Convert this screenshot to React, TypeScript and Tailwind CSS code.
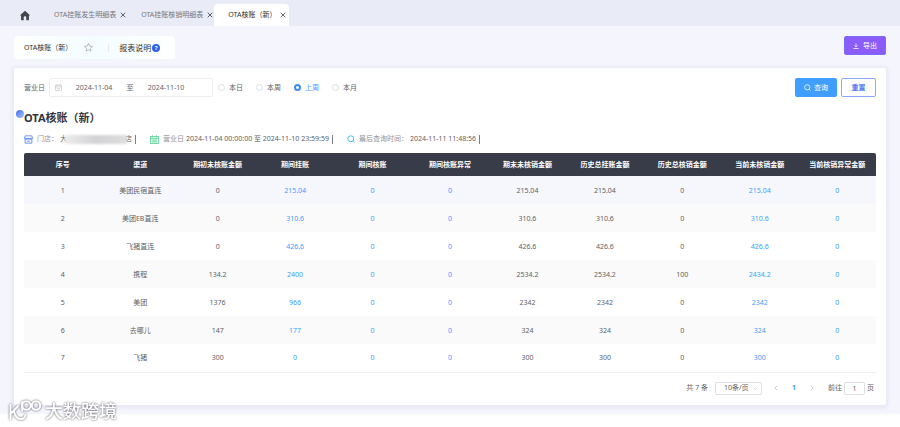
import React, { ReactElement, ReactNode, useState } from 'react';
import c from 'clsx';

const TABS = ['OTA挂账发生明细表', 'OTA挂账核销明细表', 'OTA核账（新）'];

const RANGES = ['本日', '本周', '上周', '本月'];

const COLUMNS = [
  '序号',
  '渠道',
  '期初未核账金额',
  '期间挂账',
  '期间核账',
  '期间核账异常',
  '期末未核销金额',
  '历史总挂账金额',
  '历史总核销金额',
  '当前未核销金额',
  '当前核销异常金额',
];

// columns that open a detail view
const LINK_COLUMNS = [3, 4, 5, 9, 10];

const ROWS = [
  ['1', '美团民宿直连', '0', '215.04', '0', '0', '215.04', '215.04', '0', '215.04', '0'],
  ['2', '美团EB直连', '0', '310.6', '0', '0', '310.6', '310.6', '0', '310.6', '0'],
  ['3', '飞猪直连', '0', '426.6', '0', '0', '426.6', '426.6', '0', '426.6', '0'],
  ['4', '携程', '134.2', '2400', '0', '0', '2534.2', '2534.2', '100', '2434.2', '0'],
  ['5', '美团', '1376', '966', '0', '0', '2342', '2342', '0', '2342', '0'],
  ['6', '去哪儿', '147', '177', '0', '0', '324', '324', '0', '324', '0'],
  ['7', '飞猪', '300', '0', '0', '0', '300', '300', '0', '300', '0'],
];

export default function App(): ReactElement {
  return (
    <div className="relative bg-white font-['Noto_Sans','Noto_Sans_CJK_SC',sans-serif] text-[7px] leading-[10px] text-[#606266]">
      <div className="bg-[#f4f5fd] pb-[9px]">
        <TabBar />
        <main className="px-[14px] pt-[10px]">
          <div className="flex items-start justify-between">
            <ReportHeader />
            <button className="flex h-[19px] w-[42px] items-center justify-center gap-1 rounded-xs border border-[#7a6cf8] bg-[#8a5cfa] text-white">
              <DownloadIcon />
              导出
            </button>
          </div>
          <section className="mt-[9px] rounded-xs bg-white p-[10px] shadow-[0_1px_4px_2px_rgba(60,60,110,0.07)]">
            <FilterBar />
            <h1 className="relative mt-[12px] text-[11px] leading-[18px] font-bold text-[#303440]">
              <span className="absolute top-px -left-[8px] size-[8px] rounded-full bg-linear-to-br from-[#3f66ee] to-[#b4c5fb]" />
              OTA核账（新）
            </h1>
            <InfoLine />
            <ReportTable />
            <Pagination />
          </section>
        </main>
      </div>
      <div className="h-[13px]" />
      <Watermark />
    </div>
  );
}

function TabBar(): ReactElement {
  const [active, setActive] = useState(2);

  return (
    <nav className="flex h-[26px] items-end bg-[#e9ebf7]">
      <a href="#home" aria-label="首页" className="mb-[5px] ml-[19px] mr-[9px]">
        <HomeIcon />
      </a>
      {TABS.map((tab, i) => (
        <div
          key={tab}
          className={c('flex h-[22px] items-center gap-[4px] rounded-t-sm pl-[14px]', {
            'bg-white pr-[3px] text-[#303133]': active === i,
            'pr-px text-[#75777d]': active !== i,
          })}
        >
          <button className="whitespace-nowrap" onClick={() => setActive(i)}>
            {tab}
          </button>
          <button aria-label="关闭">
            <CloseIcon />
          </button>
        </div>
      ))}
    </nav>
  );
}

function ReportHeader(): ReactElement {
  return (
    <div className="flex h-[23px] items-center rounded-sm bg-linear-to-r from-white via-[#f3fdff] to-white pr-[15px] pl-[10px] text-[#303133]">
      <span className="whitespace-nowrap">OTA核账（新）</span>
      <button aria-label="收藏" className="ml-[12px]">
        <StarIcon />
      </button>
      <span className="mr-[10px] ml-[15px] h-[8px] w-px bg-[#e6ebf2]" />
      <a href="#help" className="flex items-center gap-px whitespace-nowrap text-[8px]">
        报表说明
        <span className="flex size-[8px] items-center justify-center rounded-full bg-[#2d62f0] text-[6px] font-bold text-white">
          ?
        </span>
      </a>
    </div>
  );
}

function FilterBar(): ReactElement {
  const [range, setRange] = useState('上周');

  return (
    <form className="flex items-center" onSubmit={(e) => e.preventDefault()}>
      <label htmlFor="start">营业日</label>
      <div className="ml-[4px] flex h-[19px] w-[164px] items-center rounded-xs border border-[#eceef2] pl-[5px]">
        <CalendarIcon />
        <input
          id="start"
          className="ml-[2px] w-[60px] text-center outline-none"
          defaultValue="2024-11-04"
        />
        <span className="w-[12px] text-center">至</span>
        <input
          aria-label="结束日期"
          className="w-[60px] text-center outline-none"
          defaultValue="2024-11-10"
        />
      </div>
      <div className="ml-[5px] flex">
        {RANGES.map((item) => (
          <label
            key={item}
            className={c('flex w-[38px] items-center gap-[4px]', {
              'text-[#409eff]': range === item,
            })}
          >
            <input
              type="radio"
              name="range"
              className="size-[7px] appearance-none rounded-full border border-[#dcdfe6] bg-white checked:border-2 checked:border-[#3c8cf5]"
              checked={range === item}
              onChange={() => setRange(item)}
            />
            {item}
          </label>
        ))}
      </div>
      <div className="ml-auto flex gap-[4px]">
        <button className="flex h-[19px] w-[42px] items-center justify-center gap-[3px] rounded-xs bg-[#409eff] text-white">
          <SearchIcon className="size-[7px]" />
          查询
        </button>
        <button className="h-[19px] w-[35px] rounded-xs border border-[#8ba9f8] font-bold text-[#4a74ee]">
          重置
        </button>
      </div>
    </form>
  );
}

function InfoLine(): ReactElement {
  return (
    <div className="mt-[7px] flex h-[10px] items-center whitespace-nowrap">
      <InfoItem icon={<ShopIcon />} label="门店：">
        <span className="flex items-center">
          大
          <span className="-mx-[2px] h-[9px] w-[62px] bg-linear-to-r from-[#ececec] via-[#d3d3d5] to-[#dedede] blur-[1px]" />
          店
        </span>
      </InfoItem>
      <InfoItem icon={<DateIcon />} label="营业日">
        2024-11-04 00:00:00 至 2024-11-10 23:59:59
      </InfoItem>
      <InfoItem
        icon={<SearchIcon className="size-[8px] text-[#35b5ee]" />}
        label="最后查询时间："
      >
        2024-11-11 11:48:56
      </InfoItem>
    </div>
  );
}

function InfoItem(props: {
  icon: ReactNode;
  label: string;
  children: ReactNode;
}): ReactElement {
  return (
    <div className="mr-[14px] flex items-center">
      {props.icon}
      <span className="ml-[4px] text-[#909399]">{props.label}</span>
      <span className="ml-[2px]">{props.children}</span>
      <span className="ml-[3px] h-[9px] w-px bg-[#7c7e84]" />
    </div>
  );
}

function ReportTable(): ReactElement {
  return (
    <table className="mt-[9px] w-full table-fixed text-center">
      <thead>
        <tr className="h-[23px] text-white">
          {COLUMNS.map((col) => (
            <th
              key={col}
              className="bg-[#383c49] font-bold whitespace-nowrap first:rounded-tl-xs last:rounded-tr-xs"
            >
              {col}
            </th>
          ))}
        </tr>
      </thead>
      <tbody>
        {ROWS.map((row, r) => (
          <tr
            key={row[0]}
            className={c('h-[28px] last:border-b last:border-[#f0f1f5]', {
              'bg-[#f5f7fd]': r === 0,
              'bg-[#fafafa]': r % 2 === 1,
            })}
          >
            {row.map((cell, i) => (
              <td key={COLUMNS[i]} className="pt-px">
                {LINK_COLUMNS.includes(i) ? (
                  <a href="#detail" className="text-[#409eff]">
                    {cell}
                  </a>
                ) : (
                  cell
                )}
              </td>
            ))}
          </tr>
        ))}
      </tbody>
    </table>
  );
}

function Pagination(): ReactElement {
  return (
    <div className="mt-[9px] flex h-[13px] items-center justify-end pr-[2px]">
      <span>共 7 条</span>
      <div className="relative ml-[7px] flex items-center">
        <select
          aria-label="每页条数"
          className="h-[13px] w-[47px] appearance-none rounded-xs border border-[#dcdfe6] bg-white pl-[8px] outline-none"
        >
          <option>10条/页</option>
        </select>
        <Chevron className="pointer-events-none absolute right-[4px] size-[5px] rotate-90 text-[#c0c4cc]" />
      </div>
      <button aria-label="上一页" className="ml-[11px]">
        <Chevron className="size-[6px] rotate-180 text-[#b4b8c0]" />
      </button>
      <button className="mx-[13px] font-bold text-[#409eff]">1</button>
      <button aria-label="下一页">
        <Chevron className="size-[6px] text-[#b4b8c0]" />
      </button>
      <label className="ml-[13px] flex items-center gap-[2px]">
        前往
        <input
          className="h-[13px] w-[21px] rounded-xs border border-[#dcdfe6] text-center outline-none"
          defaultValue="1"
        />
        页
      </label>
    </div>
  );
}

function Watermark(): ReactElement {
  return (
    <div className="absolute bottom-[4px] left-[8px] flex items-center gap-[3px] text-[18px] leading-[24px] font-medium text-white drop-shadow-[0_0_1px_rgba(70,70,80,0.9)]">
      <svg viewBox="0 0 34 24" className="h-[24px] w-[34px]" fill="none" stroke="currentColor">
        <g strokeWidth="2" strokeLinecap="round" strokeLinejoin="round">
          <path d="M2.500 6v14M10 7l-6.500 7M6 12.500c1 5 3.500 7.500 7 7.500 2.500 0 4-1.500 4.500-4" />
          <path d="M14.200 3v9" />
          <circle cx="18.400" cy="6.500" r="4.200" />
          <circle cx="28" cy="6.500" r="4.200" />
        </g>
      </svg>
      大数跨境
    </div>
  );
}

function HomeIcon(): ReactElement {
  return (
    <svg viewBox="0 0 12 12" className="h-[11px] w-[12px]" fill="#44464c">
      <path d="M6 .8.9 5.400c-.3.3-.2.7.2.7H1.700v4.400c0 .4.200.6.600.6h2.300V8c0-.8.600-1.300 1.400-1.300S7.400 7.200 7.400 8v3.100h2.300c.4 0 .6-.2.6-.6V6.100h.6c.4 0 .5-.4.2-.7z" />
    </svg>
  );
}

function CloseIcon(): ReactElement {
  return (
    <svg viewBox="0 0 6 6" className="size-[6px]" fill="none" stroke="#3c3e44" strokeWidth="0.8">
      <path d="M.7.7l4.600 4.600M5.300.7L.7 5.300" />
    </svg>
  );
}

function StarIcon(): ReactElement {
  return (
    <svg viewBox="0 0 24 24" className="size-[9px]" fill="none" stroke="#989ca4" strokeWidth="1.800" strokeLinejoin="round">
      <path d="M12 1.500l3.200 6.700 7.300 1-5.300 5.100 1.300 7.300-6.500-3.500-6.500 3.500 1.300-7.300L1.500 9.200l7.300-1z" />
    </svg>
  );
}

function DownloadIcon(): ReactElement {
  return (
    <svg viewBox="0 0 12 12" className="size-[6px]" fill="none" stroke="currentColor" strokeWidth="1.500">
      <path d="M6 1v7M3 5l3 3 3-3M1 11h10" />
    </svg>
  );
}

function SearchIcon(props: { className?: string }): ReactElement {
  return (
    <svg viewBox="0 0 16 16" className={props.className} fill="none" stroke="currentColor" strokeWidth="1.800">
      <circle cx="7.500" cy="7.500" r="6" />
      <path d="M11.500 12l3 3" />
    </svg>
  );
}

function CalendarIcon(): ReactElement {
  return (
    <svg viewBox="0 0 12 12" className="size-[7px]" fill="none" stroke="#b4b8c0">
      <path d="M1 2h10v9H1zM1 5h10M3.500.5v2M8.500.5v2M3.500 8h5" />
    </svg>
  );
}

function ShopIcon(): ReactElement {
  return (
    <svg viewBox="0 0 16 16" className="size-[9px]" fill="none" stroke="#5b84f5" strokeWidth="1.500">
      <path d="M2 1.500h12L15 6H1zM2 8v6.500h12V8M5 11h6" />
      <path d="M1 6c0 3 4.500 3 4.500 0 0 3 5 3 5 0 0 3 4.500 3 4.500 0" />
    </svg>
  );
}

function DateIcon(): ReactElement {
  return (
    <svg viewBox="0 0 16 16" className="size-[9px]" fill="none" stroke="#5fd39b" strokeWidth="1.500">
      <rect x="1" y="2.500" width="14" height="12.500" fill="#dcf7ea" />
      <path d="M1 6h14M4.500.5v3.500M11.500.5v3.500M4 9h8M4 12h8" />
    </svg>
  );
}

function Chevron(props: { className?: string }): ReactElement {
  return (
    <svg viewBox="0 0 8 8" className={props.className} fill="none" stroke="currentColor">
      <path d="M2.500 1l3 3-3 3" />
    </svg>
  );
}
